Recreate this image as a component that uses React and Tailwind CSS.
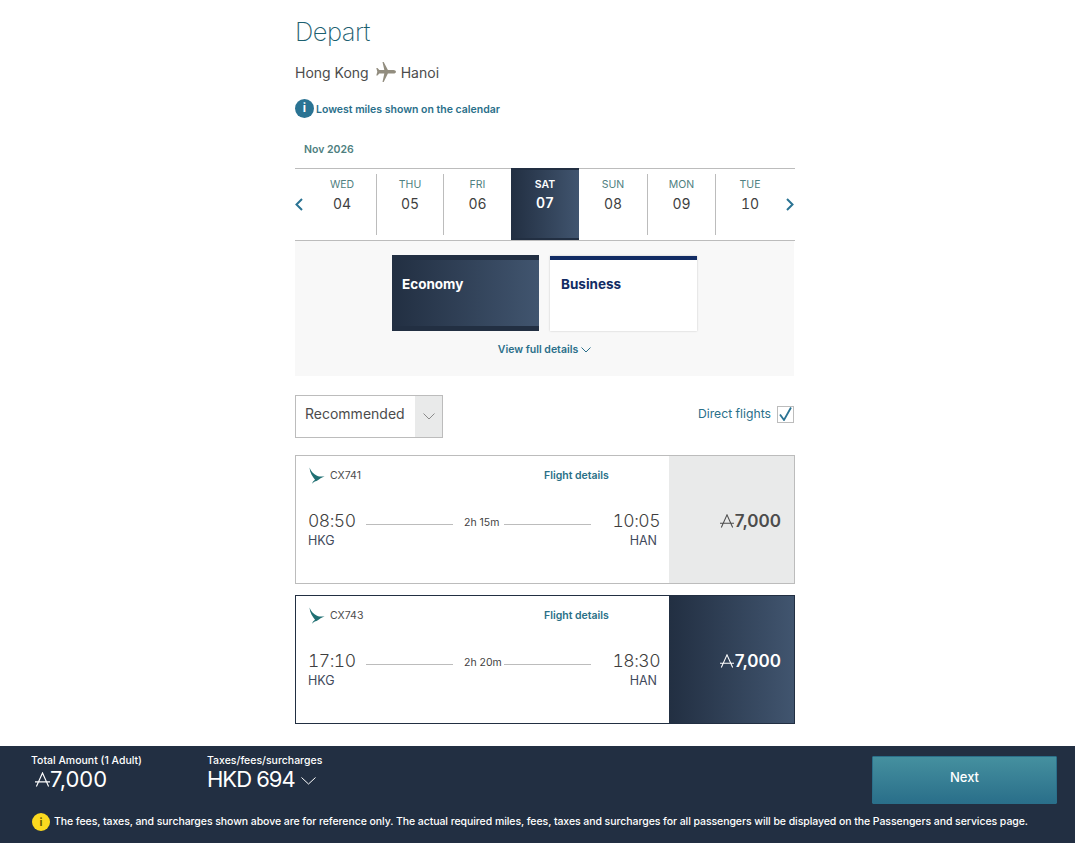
import React from 'react';

const days = [
    { name: 'WED', num: '04', width: 'w-[69px]' },
    { name: 'THU', num: '05', width: 'w-[67px]' },
    { name: 'FRI', num: '06', width: 'w-[67px]' },
    { name: 'SAT', num: '07', width: 'w-[68px]', active: true },
    { name: 'SUN', num: '08', width: 'w-[69px]' },
    { name: 'MON', num: '09', width: 'w-[68px]' },
    { name: 'TUE', num: '10', width: 'w-[68px]' },
];

const flights = [
    { no: 'CX741', dep: '08:50', arr: '10:05', dur: '2h 15m' },
    { no: 'CX743', dep: '17:10', arr: '18:30', dur: '2h 20m', active: true },
];

// Asia Miles style "A" with a cross bar
function MilesIcon({ className }) {
    return (
        <svg className={className} viewBox="0 0 16 16" fill="none" stroke="currentColor" strokeWidth="1.2">
            <path d="M1.500 15.500 8 1l6.500 14.500M0 10.500h16" />
        </svg>
    );
}

function Wing({ className }) {
    return (
        <svg className={className} viewBox="0 0 16 17" fill="#1f6f72">
            <path d="M0.500 0C2 4 4.500 6.500 8 8.200c2.500 1.100 5 .7 7.600.8-2.600.8-5.400 2.600-8 4.600-1.600.4-3 1-4.200 2.600 0-1.600 1-2.800 2.600-4C3.600 9.200 .8 5.200.5 0z" />
        </svg>
    );
}

function FlightCard({ flight }) {
    return (
        <div className={`flex h-[129px] border ${flight.active ? 'border-[#222f42]' : 'border-[#bcbcbc]'}`}>
            <div className="flex-1 pl-[12px] pr-[9px] pt-[11px] text-[#3f3f3f]">
                <div className="flex h-[18px] items-center">
                    <Wing className="ml-px w-[16px] h-[18px]" />
                    <span className="ml-[5px] w-[214px] text-[10.500px] text-[#4c4c4c]">{flight.no}</span>
                    <span className="text-[10.500px] font-semibold text-[#2a7087]">Flight details</span>
                </div>
                <div className="flex items-start mt-[24px] h-[24px]">
                    <span className="w-[58px] text-[17.500px] tracking-[-0.5px] tabular-nums font-light leading-[24px]">{flight.dep}</span>
                    <span className="w-[87px] h-px mt-[15px] bg-[#bcbcbc]" />
                    <span className="w-[51px] pl-[11px] mt-[7px] text-[10.500px] leading-[14px] whitespace-nowrap">{flight.dur}</span>
                    <span className="w-[87px] h-px mt-[15px] bg-[#bcbcbc]" />
                    <span className="flex-1 text-right text-[17.500px] tracking-[-0.5px] tabular-nums font-light leading-[24px] whitespace-nowrap">{flight.arr}</span>
                </div>
                <div className="flex justify-between mt-px pr-[3px] text-[12.500px] leading-[14px] text-[#3f4a5c]">
                    <span>HKG</span>
                    <span>HAN</span>
                </div>
            </div>
            <div className={`w-[125px] flex items-start justify-end pr-[13px] pt-[53px] ${flight.active ? 'bg-gradient-to-r from-[#222f42] to-[#41556f] text-white' : 'bg-[#e9eaea] text-[#4c4c4c]'}`}>
                <div className="flex items-center text-[17px] leading-[24px] font-semibold">
                    <MilesIcon className="mr-px w-[14px] h-[14px]" />
                    <span>7,000</span>
                </div>
            </div>
        </div>
    );
}

export default function App() {
    return (
        <div className="w-[1075px] h-[843px] flex flex-col overflow-hidden bg-white font-['Inter','Liberation_Sans',sans-serif]">
            <main className="h-[746px] w-[500px] ml-[295px]">
                <h1 className="pt-[15px] text-[25.500px] tracking-[-0.5px] leading-[34px] font-extralight text-[#1c6070]">Depart</h1>
                <div className="flex items-center mt-[11px] h-[24px] text-[14px] text-[#4c4c4c]">
                    <span>Hong Kong</span>
                    <svg className="ml-[7px] w-[20px] h-[20px]" viewBox="0 0 20 20" fill="#928d7f">
                        <path d="M6.500 0h1.200l4.200 8h5.600c1.300 0 2.500.9 2.500 1.800s-1.200 1.800-2.500 1.800h-5.600L7.700 20H6.500l1.800-8.400H3.300L1.500 13.500H.3l1-3.700-1-3.700h1.200l1.800 1.900h5z" />
                    </svg>
                    <span className="ml-[5px]">Hanoi</span>
                </div>
                <div className="flex items-center mt-[14px] h-[20px]">
                    <span className="flex items-center justify-center w-[19px] h-[19px] rounded-full bg-[#2a7393] text-white text-[12px] font-bold">i</span>
                    <span className="ml-[2px] pt-[4px] text-[10.500px] font-semibold text-[#2a6f8a]">Lowest miles shown on the calendar</span>
                </div>
                <div className="mt-[23px] pl-[9px] h-[18px] text-[10.500px] leading-[18px] font-semibold text-[#4f7f7f]">Nov 2026</div>

                <div className="flex items-stretch h-[73px] mt-[9px] border-y border-[#bcbcbc]">
                    <div className="w-[13px] flex items-center">
                        <svg className="w-[8px] h-[13px]" viewBox="0 0 8 13" fill="none" stroke="#2a7393" strokeWidth="2"><path d="M7 1 1.500 6.500 7 12" /></svg>
                    </div>
                    {days.map((d, i) => (
                        <div key={d.name} className={`${d.width} ${d.active ? 'bg-gradient-to-r from-[#222f42] to-[#41556f] -mt-px self-start h-[72px] border-y-2 border-[#222f42]' : 'h-full py-[5px]'}`}>
                            <div className={`h-full flex flex-col items-center ${d.active ? 'pt-[8px] text-white' : 'pt-[4px]'} ${!d.active && i < 6 && !days[i + 1].active ? 'border-r border-[#bcbcbc]' : ''}`}>
                                <span className={`text-[10.500px] leading-[14px] ${d.active ? 'font-semibold' : 'text-[#4f8080]'}`}>{d.name}</span>
                                <span className={`text-[14px] tabular-nums leading-[20px] ${d.active ? 'mt-px font-semibold' : 'mt-[2px] text-[#3f3f3f]'}`}>{d.num}</span>
                            </div>
                        </div>
                    ))}
                    <div className="flex-1 flex items-center justify-end pr-[1px]">
                        <svg className="w-[8px] h-[13px]" viewBox="0 0 8 13" fill="none" stroke="#2a7393" strokeWidth="2"><path d="M1 1l5.500 5.500L1 12" /></svg>
                    </div>
                </div>

                <div className="w-[499px] h-[135px] bg-[#f8f8f8] pt-[14px]">
                    <div className="flex justify-center gap-[11px]">
                        <div className="w-[147px] h-[76px] border-y-[5px] border-[#222f42] bg-gradient-to-r from-[#222f42] to-[#41556f] px-[10px] pt-[14px] text-[13.500px] leading-[20px] font-bold text-white">Economy</div>
                        <div className="w-[147px] h-[75px] mt-px border-t-4 border-[#122c64] bg-white shadow-[0_0_2px_rgba(0,0,0,0.2)] px-[11px] pt-[14px] text-[13.500px] leading-[20px] font-bold text-[#122c64]">Business</div>
                    </div>
                    <div className="flex items-center justify-center mt-[11px] h-[16px] text-[10.500px] font-semibold text-[#2a6f8a]">
                        View full details
                        <svg className="ml-[3px] w-[10px] h-[6px]" viewBox="0 0 10 6" fill="none" stroke="#2a6f8a"><path d="M.5.500 5 5 9.500.500" /></svg>
                    </div>
                </div>

                <div className="flex items-center justify-between mt-[19px] h-[43px]">
                    <div className="flex w-[148px] h-[43px] border border-[#bcbcbc]">
                        <span className="flex-1 pl-[9px] text-[14px] leading-[35px] text-[#4c4c4c]">Recommended</span>
                        <span className="w-[27px] flex items-center justify-center bg-[#e9eaea]">
                            <svg className="w-[12px] h-[7px]" viewBox="0 0 12 7" fill="none" stroke="#8a8a8a"><path d="M.5.500 6 6 11.500.500" /></svg>
                        </span>
                    </div>
                    <div className="flex items-center pb-[4px] pr-px">
                        <span className="text-[12.200px] text-[#2a6f8a]">Direct flights</span>
                        <span className="flex items-center justify-center ml-[6px] w-[17px] h-[17px] border border-[#bcbcbc]">
                            <svg className="w-[13px] h-[14px]" viewBox="0 0 13 14" fill="none" stroke="#2a7393" strokeWidth="1.800"><path d="M1 7.500 5 13 12 .500" /></svg>
                        </span>
                    </div>
                </div>

                <div className="mt-[17px] flex flex-col gap-[11px]">
                    {flights.map((f) => <FlightCard key={f.no} flight={f} />)}
                </div>
            </main>

            <footer className="h-[97px] bg-[#222f42] text-white px-[18px] pt-[10px]">
                <div className="flex">
                    <div className="ml-[13px] w-[176px]">
                        <div className="text-[10.500px] leading-[9px] font-medium">Total Amount (1 Adult)</div>
                        <div className="flex items-center text-[22px] leading-[28px]">
                            <MilesIcon className="ml-[4px] w-[15px] h-[15px]" />
                            7,000
                        </div>
                    </div>
                    <div className="flex-1">
                        <div className="text-[10.500px] leading-[9px] font-medium">Taxes/fees/surcharges</div>
                        <div className="flex items-center text-[22px] tracking-[-1px] leading-[28px]">
                            HKD 694
                            <svg className="ml-[6px] mt-[3px] w-[15px] h-[8px]" viewBox="0 0 15 8" fill="none" stroke="white"><path d="M.5.500 7.500 7 14.500.500" /></svg>
                        </div>
                    </div>
                    <button className="w-[185px] h-[48px] -ml-px pb-[4px] bg-gradient-to-b from-[#45909f] to-[#2a6f8a] border border-[#2a6f8a] rounded-[1px] text-[13px] font-medium text-white">Next</button>
                </div>
                <div className="flex items-center ml-[14px] mt-[8px] h-[20px]">
                    <span className="shrink-0 flex items-center justify-center w-[18px] h-[18px] rounded-full bg-[#fbd91f] text-[#6b5c00] text-[11px] font-bold">i</span>
                    <span className="ml-[4px] text-[10.500px] tracking-[-0.067px] font-medium whitespace-nowrap">The fees, taxes, and surcharges shown above are for reference only. The actual required miles, fees, taxes and surcharges for all passengers will be displayed on the Passengers and services page.</span>
                </div>
            </footer>
        </div>
    );
}
